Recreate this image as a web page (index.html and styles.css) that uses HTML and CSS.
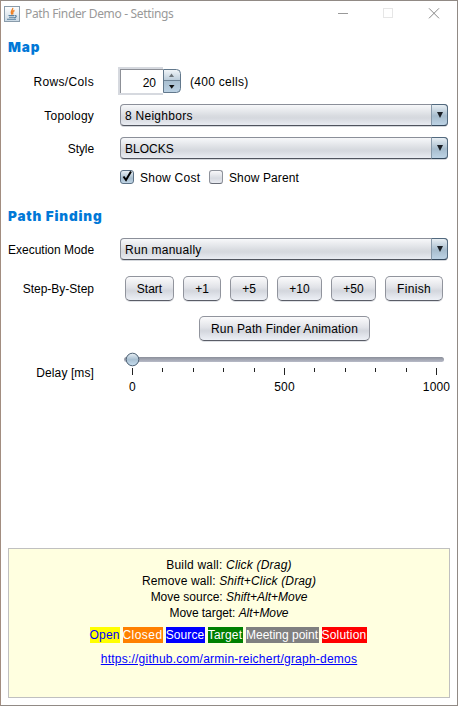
FILE: index.html
```html
<!DOCTYPE html>
<html lang="en">
<head>
<meta charset="utf-8">
<title>Path Finder Demo - Settings</title>
<link rel="stylesheet" href="styles.css">
</head>
<body>
<div class="window">
  <header class="titlebar">
    <svg class="java" width="16" height="16" viewBox="0 0 16 16">
      <defs><linearGradient id="jb" x1="0" y1="0" x2="0" y2="1"><stop offset="0" stop-color="#fff"/><stop offset="1" stop-color="#c9d8e4"/></linearGradient></defs>
      <rect x=".5" y=".5" width="15" height="15" fill="url(#jb)" stroke="#8a9cab"/>
      <path d="M8.500 2C10 3.500 5.500 4.800 8 8.500M10.500 4.500C7.500 5.500 9.500 6.500 8.500 8.500" fill="none" stroke="#ee8126" stroke-width="1.400"/>
      <path d="M4.500 9.500h5.500M5 11.200h5M3 13.300h9M10.500 9.500c3-.3 1.700 2.300-.5 2.300" fill="none" stroke="#58809f" stroke-width="1.100"/>
    </svg>
    <span class="title">Path Finder Demo - Settings</span>
    <svg class="controls" width="101" height="11" viewBox="0 0 101 11">
      <path d="M0 5.500h10" stroke="#999" fill="none"/>
      <rect x="45.500" y=".5" width="9" height="9" fill="none" stroke="#e6e6e6"/>
      <path d="M91 .3l10 10M101 .3l-10 10" stroke="#888" fill="none"/>
    </svg>
  </header>
  <main class="content">
    <h2 class="heading map">Map</h2>
    <div class="row spinner-row">
      <label class="label rows">Rows/Cols</label>
      <div class="spinner">
        <span class="number">20</span>
        <svg width="18" height="25" viewBox="0 0 18 25">
          <defs><linearGradient id="sp" x1="0" y1="0" x2="0" y2="1"><stop offset="0" stop-color="#f3f7fa"/><stop offset=".45" stop-color="#bccddb"/><stop offset=".5" stop-color="#a9bfd0"/><stop offset="1" stop-color="#bcd2e4"/></linearGradient></defs>
          <path d="M.5.5H13.500Q17.500.5 17.500 4.500V19.500Q17.500 23.500 13.500 23.500H.5z" fill="url(#sp)" stroke="#62788c"/>
          <path d="M1 11.500h16" stroke="#6f8496"/>
          <path d="M6 8L8.500 4.500 11 8z" fill="#6d747a"/><path d="M6 16h5.500L8.700 19.800z" fill="#111"/>
        </svg>
      </div>
      <span class="cells">(400 cells)</span>
    </div>
    <div class="row topology-row"><label class="label topology">Topology</label><div class="combo"><span>8 Neighbors</span><i class="arrow"></i></div></div>
    <div class="row style-row"><label class="label style">Style</label><div class="combo"><span class="blocks">BLOCKS</span><i class="arrow"></i></div></div>
    <div class="checks">
      <span class="box checked"><svg width="14" height="14" viewBox="0 0 14 14"><path d="M3.500 6.500L6 10 11 1.500" fill="none" stroke="#000" stroke-width="2"/></svg></span><span class="cost">Show Cost</span>
      <span class="box"></span><span class="parent">Show Parent</span>
    </div>
    <h2 class="heading path">Path Finding</h2>
    <div class="row mode-row"><label class="label">Execution Mode</label><div class="combo"><span>Run manually</span><i class="arrow"></i></div></div>
    <div class="row step-row">
      <label class="label">Step-By-Step</label>
      <div class="steps"><button class="w49">Start</button><button class="w38">+1</button><button class="w38">+5</button><button class="w45">+10</button><button class="w45">+50</button><button class="w58">Finish</button></div>
    </div>
    <div class="run-row"><button class="run">Run Path Finder Animation</button></div>
    <div class="row slider-row">
      <label class="label delay">Delay [ms]</label>
      <div class="slider">
        <svg width="330" height="25" viewBox="120 352 330 25">
          <defs>
            <linearGradient id="tr" x1="0" y1="0" x2="0" y2="1"><stop offset="0" stop-color="#8b8f9a"/><stop offset="1" stop-color="#b8bbc8"/></linearGradient>
            <linearGradient id="th" x1="0" y1="0" x2="0" y2="1"><stop offset="0" stop-color="#e9f0f5"/><stop offset=".5" stop-color="#a9c0d2"/><stop offset="1" stop-color="#c8dff0"/></linearGradient>
          </defs>
          <rect x="124" y="357" width="320" height="5" rx="2.500" fill="url(#tr)"/>
          <circle cx="132.500" cy="359.500" r="6.300" fill="url(#th)" stroke="#4d6174"/>
          <path d="M132.500 368v7M284.500 368v7M436.500 368v7M162.500 368v4M193.500 368v4M223.500 368v4M254.500 368v4M314.500 368v4M345.500 368v4M375.500 368v4M406.500 368v4" stroke="#222"/>
        </svg>
        <div class="scale"><span>0</span><span>500</span><span>1000</span></div>
      </div>
    </div>
    <section class="help">
      <p class="build">Build wall: <em>Click (Drag)</em></p>
      <p class="remove">Remove wall: <em>Shift+Click (Drag)</em></p>
      <p>Move source: <em>Shift+Alt+Move</em></p>
      <p class="move-target">Move target: <em>Alt+Move</em></p>
      <div class="legend"><span class="open">Open</span><span class="closed">Closed</span><span class="source">Source</span><span class="target">Target</span><span class="meeting">Meeting point</span><span class="solution">Solution</span></div>
      <a href="#">https://github.com/armin-reichert/graph-demos</a>
    </section>
  </main>
</div>
</body>
</html>
```
FILE: styles.css
```css
* { box-sizing: border-box; }
body { margin: 0; background: #fff; font: 12px/16px "Liberation Sans", Arial, sans-serif; color: #000; }
.window { width: 458px; height: 706px; border: 1px solid #918a85; border-left-color: #a28d80; overflow: hidden; }
.titlebar { height: 26px; display: flex; align-items: center; padding-left: 3px; }
.title { width: 305px; margin-left: 5px; margin-top: -1px; font: 12px/16px "Noto Sans", sans-serif; letter-spacing: -.34px; color: #999; white-space: nowrap; }
.java { margin-top: -1px; }
.controls { margin-left: 8px; margin-top: -2px; overflow: visible; }
.content { padding: 0 7px; }
.heading { margin: 0; font: 900 13.5px/20px Inter, sans-serif; color: #0078d7; letter-spacing: .85px; }
.map { margin-top: 10px; }
.row { display: flex; align-items: center; white-space: nowrap; }
.label { width: 86px; margin-right: 26px; text-align: right; flex: none; }
.rows { padding-top: 2px; letter-spacing: .36px; }
.topology { letter-spacing: .2px; }
.style { letter-spacing: -.1px; }
.topology, .style, .combo span, .mode-row .label { padding-top: 2px; }
.spinner-row { height: 28px; margin-top: 10px; }
.spinner { display: flex; align-items: center; margin-left: -2px; }
.number { width: 45px; height: 28px; padding: 6px 7px 0 0; text-align: right; border: 2px solid #d6d9df; border-right: 0; box-shadow: inset 1px 1px #8d9097; }
.cells { padding-top: 2px; margin-left: 9px; letter-spacing: .28px; }
.combo { width: 328px; height: 22px; display: flex; align-items: center; justify-content: space-between; padding-left: 4px; letter-spacing: .27px; border: 1px solid #8b8f99; border-bottom-color: #50545e; border-radius: 4px; background: linear-gradient(#f7f8fa, #d8dbe0 55%, #d5d8de 65%, #e9ecf2); box-shadow: 0 1px #d4d7dc; }
.blocks { letter-spacing: 0; }
.arrow { width: 17px; height: 22px; margin-right: -1px; border: 1px solid #52697e; border-left-color: #8799a9; border-bottom-color: #34485c; border-radius: 0 4px 4px 0; background: linear-gradient(#e8eff4, #a6bccd 55%, #bdd3e5); display: flex; align-items: center; justify-content: center; }
.arrow::before { content: ""; border: 3.5px solid transparent; border-top: 6px solid #1b2027; border-bottom: 0; }
.topology-row { margin-top: 9px; }
.style-row { margin-top: 11px; }
.checks { display: flex; align-items: center; height: 16px; margin: 10px 0 0 112px; }
.box { width: 14px; height: 14px; margin-right: 6px; border: 1px solid #8e929b; border-bottom-color: #686c76; border-radius: 3px; background: linear-gradient(#f8f8fa, #d7dae1 60%, #e9ebf1); }
.checked { border-color: #5c7185; background: linear-gradient(#e8eff4, #a7bdce 60%, #bfd4e5); }
.box svg { display: block; margin: -1px; overflow: visible; }
.cost, .parent { padding-top: 1px; }
.cost { width: 69px; letter-spacing: .25px; }
.parent { letter-spacing: .12px; }
.path { margin-top: 21px; }
.mode-row { margin-top: 12px; }
.step-row { margin-top: 16px; }
.steps { display: flex; justify-content: space-between; width: 318px; margin-left: 5px; }
button { font: inherit; color: #000; height: 25px; padding: 0; border: 1px solid #91949d; border-bottom-color: #5a5d67; border-radius: 5px; background: linear-gradient(#fbfbfc, #e1e3e8 45%, #d3d6dd 60%, #edf0f6); box-shadow: 0 1px #dfe1e5; }
.w49 { width: 49px; }
.w38 { width: 38px; }
.w45 { width: 45px; }
.w58 { width: 58px; letter-spacing: .3px; }
.run-row { margin: 15px 0 0 191px; }
.run { width: 171px; display: block; letter-spacing: .14px; }
.slider-row { align-items: flex-start; margin-top: 11px; height: 43px; }
.slider { width: 330px; }
.slider svg { display: block; }
.delay { padding-top: 13px; letter-spacing: .1px; }
.scale { display: grid; grid-template-columns: 25px 279px 25px; justify-items: center; width: 330px; margin-top: 2px; letter-spacing: .15px; }
.help { width: 442px; height: 150px; margin-top: 153px; padding-top: 8px; text-align: center; background: #ffffe0; border: 1px solid #c0c0c0; }
.help p { margin: 0; }
.build { letter-spacing: .2px; }
.remove { letter-spacing: .14px; }
.move-target { letter-spacing: -.07px; }
.legend { display: flex; justify-content: center; gap: 3px; margin: 6px 2px 8px 0; color: #fff; }
.open { width: 30px; background: #ff0; color: #00f; letter-spacing: .2px; }
.closed { width: 40px; background: #ff8000; letter-spacing: .45px; }
.source { width: 39px; background: #00f; letter-spacing: .1px; }
.target { width: 35px; background: green; letter-spacing: .2px; }
.meeting { width: 73px; background: gray; }
.solution { width: 45px; background: red; letter-spacing: .2px; }
.help a { color: #00f; letter-spacing: .23px; }
```
